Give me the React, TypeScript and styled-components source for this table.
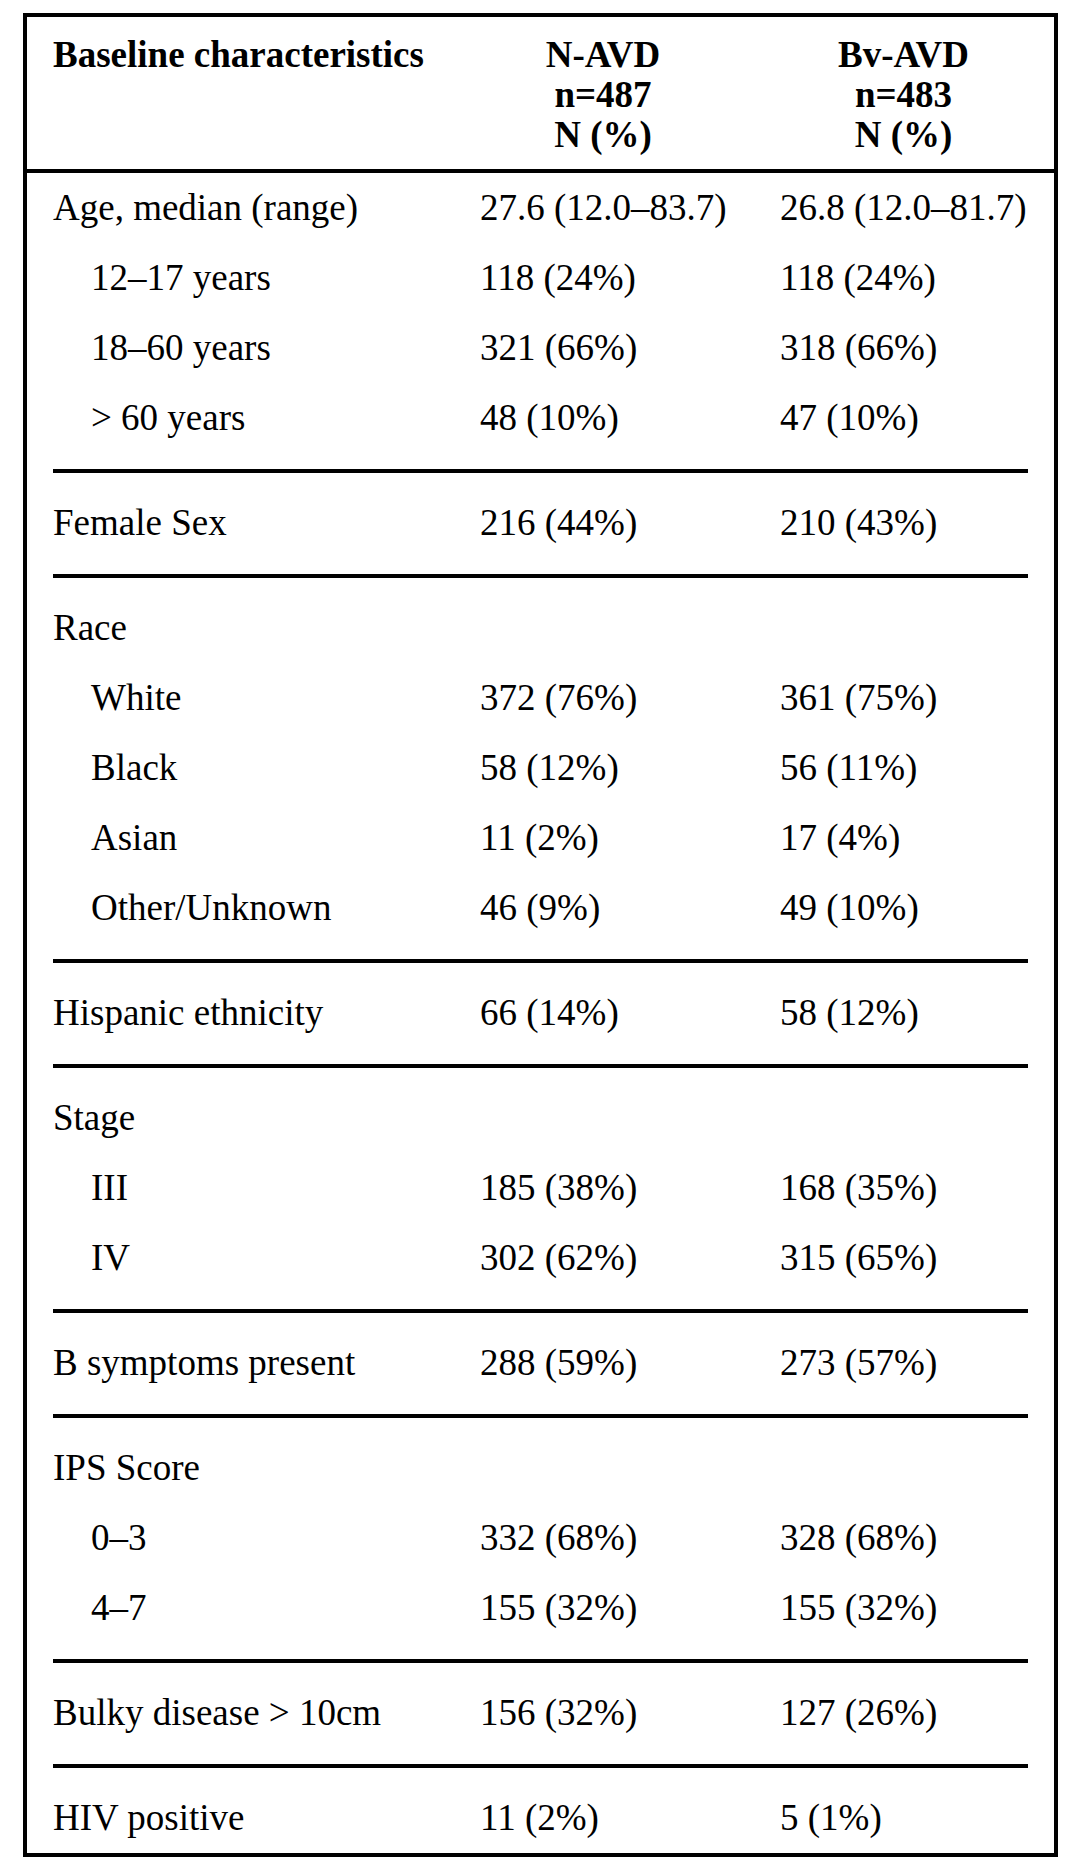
import React from "react";
import styled, { createGlobalStyle } from "styled-components";

const GlobalStyle = createGlobalStyle`
    html, body {
        margin: 0;
        padding: 0;
        background-color: #FFFFFF;
    }

    body {
        font-family: "Liberation Serif", "Times New Roman", serif;
        color: #000000;
    }
`;

const Frame = styled.div`
    margin: 13px 0 0 23px;
    width: 1027px;
    border: 4px solid #000000;
    background-color: #FFFFFF;
`;

const Columns = styled.div`
    display: grid;
    grid-template-columns: 426px 300px 301px;
`;

const HeaderRow = styled(Columns)`
    padding: 17.5px 0 14.5px 0;
    border-bottom: 4px solid #000000;
    font-size: 37px;
    font-weight: 700;
    line-height: 40px;
`;

const HeaderLabel = styled.div`
    padding-left: 26px;
`;

const HeaderArm = styled.div`
    text-align: center;
`;

const Row = styled(Columns)`
    height: 70px;
    align-items: center;
    font-size: 37px;
    line-height: 70px;
    white-space: nowrap;
`;

const Label = styled.div<{ $indent?: boolean }>`
    padding-left: ${({ $indent }) => ($indent ? "64px" : "26px")};
`;

const Value = styled.div`
    padding-left: 27px;
`;

const Separator = styled.div`
    height: 4px;
    margin: 16px 26px 15px 26px;
    background-color: #000000;
`;

type Line = {
    label: string;
    a?: string;
    b?: string;
    indent?: boolean;
};

const groups: Line[][] = [
    [
        { label: "Age, median (range)", a: "27.6 (12.0–83.7)", b: "26.8 (12.0–81.7)" },
        { label: "12–17 years", a: "118 (24%)", b: "118 (24%)", indent: true },
        { label: "18–60 years", a: "321 (66%)", b: "318 (66%)", indent: true },
        { label: "> 60 years", a: "48 (10%)", b: "47 (10%)", indent: true },
    ],
    [{ label: "Female Sex", a: "216 (44%)", b: "210 (43%)" }],
    [
        { label: "Race" },
        { label: "White", a: "372 (76%)", b: "361 (75%)", indent: true },
        { label: "Black", a: "58 (12%)", b: "56 (11%)", indent: true },
        { label: "Asian", a: "11 (2%)", b: "17 (4%)", indent: true },
        { label: "Other/Unknown", a: "46 (9%)", b: "49 (10%)", indent: true },
    ],
    [{ label: "Hispanic ethnicity", a: "66 (14%)", b: "58 (12%)" }],
    [
        { label: "Stage" },
        { label: "III", a: "185 (38%)", b: "168 (35%)", indent: true },
        { label: "IV", a: "302 (62%)", b: "315 (65%)", indent: true },
    ],
    [{ label: "B symptoms present", a: "288 (59%)", b: "273 (57%)" }],
    [
        { label: "IPS Score" },
        { label: "0–3", a: "332 (68%)", b: "328 (68%)", indent: true },
        { label: "4–7", a: "155 (32%)", b: "155 (32%)", indent: true },
    ],
    [{ label: "Bulky disease > 10cm", a: "156 (32%)", b: "127 (26%)" }],
    [{ label: "HIV positive", a: "11 (2%)", b: "5 (1%)" }],
];

export default function App() {
    return (
        <>
            <GlobalStyle />
            <Frame>
                <HeaderRow>
                    <HeaderLabel>Baseline characteristics</HeaderLabel>
                    <HeaderArm>
                        N-AVD
                        <br />
                        n=487
                        <br />
                        N (%)
                    </HeaderArm>
                    <HeaderArm>
                        Bv-AVD
                        <br />
                        n=483
                        <br />
                        N (%)
                    </HeaderArm>
                </HeaderRow>
                {groups.map((group, gi) => (
                    <React.Fragment key={gi}>
                        {gi > 0 && <Separator />}
                        {group.map((line) => (
                            <Row key={line.label}>
                                <Label $indent={line.indent}>{line.label}</Label>
                                <Value>{line.a}</Value>
                                <Value>{line.b}</Value>
                            </Row>
                        ))}
                    </React.Fragment>
                ))}
            </Frame>
        </>
    );
}
